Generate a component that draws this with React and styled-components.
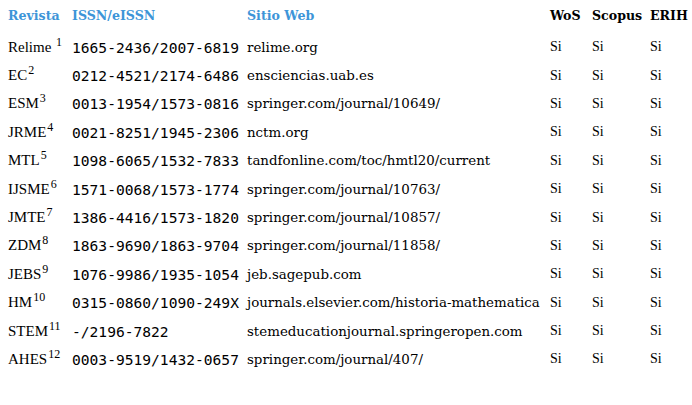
import React from 'react';
import styled, { createGlobalStyle } from 'styled-components';

const Global = createGlobalStyle`
  html, body { margin: 0; padding: 0; background: #fff; }
`;

const rows = [
  ['Relime', 1, '1665-2436/2007-6819', 'relime.org'],
  ['EC', 2, '0212-4521/2174-6486', 'ensciencias.uab.es'],
  ['ESM', 3, '0013-1954/1573-0816', 'springer.com/journal/10649/'],
  ['JRME', 4, '0021-8251/1945-2306', 'nctm.org'],
  ['MTL', 5, '1098-6065/1532-7833', 'tandfonline.com/toc/hmtl20/current'],
  ['IJSME', 6, '1571-0068/1573-1774', 'springer.com/journal/10763/'],
  ['JMTE', 7, '1386-4416/1573-1820', 'springer.com/journal/10857/'],
  ['ZDM', 8, '1863-9690/1863-9704', 'springer.com/journal/11858/'],
  ['JEBS', 9, '1076-9986/1935-1054', 'jeb.sagepub.com'],
  ['HM', 10, '0315-0860/1090-249X', 'journals.elsevier.com/historia-mathematica'],
  ['STEM', 11, '-/2196-7822', 'stemeducationjournal.springeropen.com'],
  ['AHES', 12, '0003-9519/1432-0657', 'springer.com/journal/407/'],
];

const Table = styled.div`
  display: grid;
  grid-template-columns: 64px 175px 303px 42px 58px 1fr;
  grid-template-rows: 31px;
  grid-auto-rows: 28.4px;
  padding: 2px 0 0 8px;
  align-items: center;
  color: #000;
`;

const Head = styled.div`
  font-family: "DejaVu Serif", "Liberation Serif", serif;
  font-weight: bold;
  font-size: 12.6px;
  color: ${p => (p.$blue ? '#3d95d8' : '#000')};
  line-height: 28px;
  align-self: start;
`;

const Name = styled.div`
  font-family: "Liberation Serif", serif;
  font-size: 15px;
  white-space: nowrap;
`;

const Sup = styled.sup`
  font-size: 12px;
  vertical-align: 6px;
  line-height: 0;
  margin-left: 1px;
`;

const Issn = styled.div`
  font-family: "DejaVu Sans Mono", monospace;
  font-size: 14.6px;
  white-space: nowrap;
`;

const Web = styled.div`
  font-family: "DejaVu Serif", "Liberation Serif", serif;
  font-size: 13.4px;
  white-space: nowrap;
`;

const Yes = styled.div`
  font-family: "Liberation Serif", serif;
  font-size: 14px;
`;

export default function App() {
  return (
    <>
      <Global />
      <Table>
        <Head $blue>Revista</Head>
        <Head $blue>ISSN/eISSN</Head>
        <Head $blue>Sitio Web</Head>
        <Head>WoS</Head>
        <Head>Scopus</Head>
        <Head>ERIH</Head>
        {rows.map(([name, n, issn, web]) => (
          <React.Fragment key={name}>
            <Name>
              {name}
              {name === 'Relime' ? ' ' : ''}
              <Sup>{n}</Sup>
            </Name>
            <Issn>{issn}</Issn>
            <Web>{web}</Web>
            <Yes>Si</Yes>
            <Yes>Si</Yes>
            <Yes>Si</Yes>
          </React.Fragment>
        ))}
      </Table>
    </>
  );
}
